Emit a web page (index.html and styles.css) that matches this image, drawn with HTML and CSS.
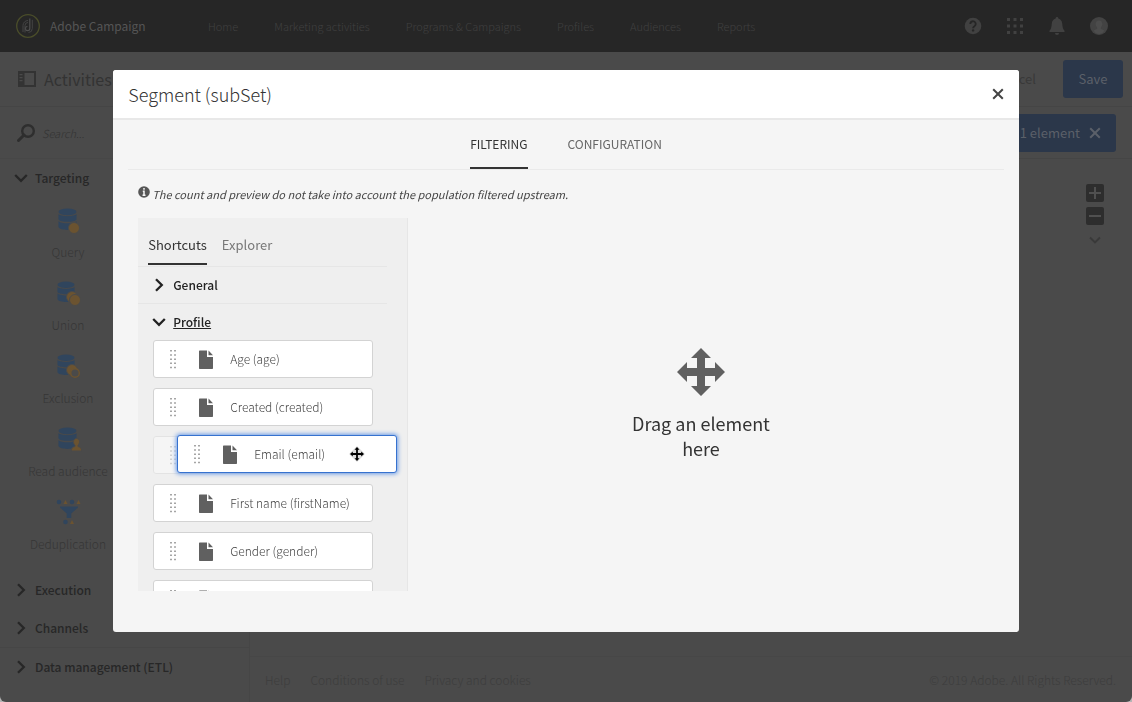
FILE: index.html
```html
<!DOCTYPE html>
<html lang="en">
<head>
<meta charset="UTF-8">
<meta name="viewport" content="width=device-width, initial-scale=1">
<title>Adobe Campaign - Segment</title>
<link rel="stylesheet" href="styles.css">
</head>
<body>

<!-- shared icons -->
<svg class="sprite" aria-hidden="true">
  <symbol id="i-right" viewBox="0 0 14 14"><path d="M4 1.200 9.800 7 4 12.800" fill="none" stroke="currentColor" stroke-width="2.300"/></symbol>
  <symbol id="i-down" viewBox="0 0 14 14"><path d="M1.200 4 7 9.800 12.800 4" fill="none" stroke="currentColor" stroke-width="2.300"/></symbol>
  <symbol id="i-close" viewBox="0 0 12 12"><path d="M1.200 1.200l9.600 9.600M10.800 1.200l-9.600 9.600" fill="none" stroke="currentColor" stroke-width="2"/></symbol>
  <symbol id="i-grip" viewBox="0 0 8 20">
    <path d="M2 1v18.500M6 1v18.500" fill="none" stroke="currentColor" stroke-width="1.500" stroke-dasharray="1.500 2.700"/>
  </symbol>
  <symbol id="i-file" viewBox="0 0 14 19"><path d="M0 1.200Q0 .5.700.5H8v6.500h6v11.300q0 .7-.7.700H.7q-.7 0-.7-.7z"/><path d="M9.500.5 14 5.300H9.500z"/></symbol>
  <symbol id="i-move" viewBox="0 0 48 48"><path d="M24 0l10 10h-6v10h10v-6l10 10-10 10v-6H28v10h6L24 48 14 38h6V28H10v6L0 24l10-10v6h10V10h-6z"/></symbol>
  <symbol id="i-data" viewBox="0 0 20 24">
    <ellipse cx="10" cy="4" rx="9.500" ry="3.600"/>
    <path d="M.5 6.300c2 3 17 3 19 0v5.700c-2 3.300-17 3.300-19 0z"/>
    <path d="M.5 13.500c2 3.200 17 3.200 19 0V20c-2 4-17 4-19 0z"/>
  </symbol>
</svg>

<div class="app">
  <header class="topbar">
    <a class="brand" href="#">
      <svg width="24" height="24" viewBox="0 0 24 24" fill="none">
        <circle cx="12" cy="12" r="11.300" stroke="#4a4d2a" stroke-width="1.300"/>
        <path d="M13.800 4.500v10a2.200 2.200 0 0 1-4.400 0 2 2 0 0 1 2-2" stroke="#505050" stroke-width="1.200"/>
        <path d="M12 6.500a5 5 0 0 0-5 5v6.500M12 8.500a3 3 0 0 0-3 3v7M12.500 18.500a4 4 0 0 0 3.800-4V5.800" stroke="#444" stroke-width="1"/>
      </svg>
      Adobe Campaign
    </a>
    <nav class="menu">
      <a href="#">Home</a>
      <a href="#">Marketing activities</a>
      <a href="#">Programs &amp; Campaigns</a>
      <a href="#">Profiles</a>
      <a href="#">Audiences</a>
      <a href="#">Reports</a>
    </nav>
    <div class="tools">
      <button aria-label="Help">
        <svg width="18" height="18" viewBox="0 0 18 18"><circle cx="9" cy="9" r="8.300" fill="currentColor"/><path d="M6.300 7a2.700 2.700 0 1 1 4.300 2.100C9.500 9.800 9.100 10 9.100 11.300" fill="none" stroke="#262626" stroke-width="1.900"/><circle cx="9.100" cy="13.400" r="1.200" fill="#262626"/></svg>
      </button>
      <button aria-label="Applications">
        <svg width="18" height="18" viewBox="0 0 18 18" fill="currentColor"><path d="M1 1h3v3H1zM7.500 1h3v3h-3zM14 1h3v3h-3zM1 7.500h3v3H1zM7.500 7.500h3v3h-3zM14 7.500h3v3h-3zM1 14h3v3H1zM7.500 14h3v3h-3zM14 14h3v3h-3z"/></svg>
      </button>
      <button aria-label="Notifications">
        <svg width="18" height="18" viewBox="0 0 18 18" fill="currentColor"><path d="M9 0c.8 0 1.300.6 1.300 1.400 2.600.7 3.700 2.600 3.900 5.100.3 4 .8 5.500 2.300 7.200V15h-15v-1.300c1.500-1.700 2-3.200 2.300-7.200.2-2.500 1.300-4.400 3.900-5.100C7.700.6 8.200 0 9 0z"/><path d="M7 16h4a2 2 0 0 1-4 0z"/></svg>
      </button>
      <button class="avatar" aria-label="User profile">
        <svg width="18" height="18" viewBox="0 0 18 18"><circle cx="9" cy="9" r="9" fill="#434343"/><path d="M9 3.500c2.200 0 3.300 1.600 3.300 3.500 0 1.500-.7 2.800-1.500 3.500v1.200l3.500 1.800C13 16.300 11 17 9 17s-4-.7-5.300-3.500l3.500-1.800v-1.200C6.400 9.800 5.700 8.500 5.700 7c0-1.900 1.100-3.500 3.300-3.500z" fill="#4c4c4c"/></svg>
      </button>
    </div>
  </header>

  <div class="titlebar">
    <h1>
      <svg width="18" height="16" viewBox="0 0 18 16"><path d="M0 0h18v16H0zM6.500 2v12H16V2zM1.500 3v1.300h3V3zM1.500 6v1.300h3V6zM1.500 9v1.300h3V9z" fill="currentColor" fill-rule="evenodd"/></svg>
      Activities
    </h1>
    <button class="cancel">Cancel</button>
    <button class="save">Save</button>
  </div>

  <div class="main">
    <aside class="sidebar">
      <div class="search">
        <svg width="18" height="18" viewBox="0 0 18 18" fill="none" stroke="currentColor"><circle cx="11" cy="7" r="5.800" stroke-width="2.400"/><path d="M7 11l-5.500 5.500" stroke-width="3" stroke-linecap="round"/></svg>
        <input type="text" placeholder="Search..." aria-label="Search activities">
      </div>
      <button class="group"><svg width="14" height="14"><use href="#i-down"/></svg>Targeting</button>
      <ul class="activities">
        <li>
          <svg width="28" height="28" viewBox="0 0 28 28"><use href="#i-data" x="4" y="1" width="19" height="23"/><circle class="dot" cx="20" cy="21" r="5.500"/></svg>
          Query
        </li>
        <li>
          <svg width="28" height="28" viewBox="0 0 28 28"><use href="#i-data" x="3" y="1" width="18" height="22"/><circle class="dot" cx="18" cy="17" r="5.500"/><circle class="dot" cx="21" cy="20" r="5.500"/></svg>
          Union
        </li>
        <li>
          <svg width="28" height="28" viewBox="0 0 28 28"><use href="#i-data" x="3" y="1" width="18" height="22"/><circle class="dot" cx="18" cy="17" r="5.500"/><circle class="ring" cx="21" cy="20" r="4.300"/></svg>
          Exclusion
        </li>
        <li>
          <svg width="28" height="28" viewBox="0 0 28 28"><use href="#i-data" x="4" y="1" width="19" height="23"/><path class="dot" d="M22.500 12.500c2 0 3 1.400 3 3.300 0 1.600-.8 2.700-1.500 3.600v1.100c2 .5 3.700 1.200 3.700 4.500H17.300c0-3.300 1.700-4 3.700-4.500v-1.100c-.7-.9-1.500-2-1.500-3.600 0-1.900 1-3.300 3-3.300z"/></svg>
          Read audience
        </li>
        <li>
          <svg width="28" height="28" viewBox="0 0 28 28"><circle cx="5" cy="3" r="2.300"/><circle cx="18" cy="3" r="2.300"/><path d="M6 7.500h18v1l-6.700 6v4.500h-4.600v-4.500L6 8.500z"/><circle cx="11.500" cy="23" r="2.300"/><path class="tri" d="M9.500 5l2-4 2 4zM22.500 5l2-4 2 4zM16 25l2-4 2 4z"/></svg>
          Deduplication
        </li>
      </ul>
      <button class="group"><svg width="14" height="14"><use href="#i-right"/></svg>Execution</button>
      <button class="group"><svg width="14" height="14"><use href="#i-right"/></svg>Channels</button>
      <button class="group line"><svg width="14" height="14"><use href="#i-right"/></svg>Data management (ETL)</button>
    </aside>

    <div class="workspace">
      <div class="selection">
        <div class="selected">
          1 element
          <button aria-label="Clear selection"><svg width="12" height="12"><use href="#i-close"/></svg></button>
        </div>
      </div>
      <div class="canvas">
        <div class="zoom">
          <button aria-label="Zoom in"><svg width="18" height="18" viewBox="0 0 18 18"><rect width="18" height="18" rx="2" fill="#2d2d2d"/><path d="M9 3v12M3 9h12" stroke="#505050" stroke-width="2"/></svg></button>
          <button aria-label="Zoom out"><svg width="18" height="18" viewBox="0 0 18 18"><rect width="18" height="18" rx="2" fill="#2d2d2d"/><path d="M3 9h12" stroke="#505050" stroke-width="2"/></svg></button>
          <button aria-label="More"><svg width="12" height="12"><use href="#i-down"/></svg></button>
        </div>
      </div>
      <footer class="footer">
        <a href="#">Help</a>
        <a href="#">Conditions of use</a>
        <a href="#">Privacy and cookies</a>
        <span>© 2019 Adobe. All Rights Reserved.</span>
      </footer>
    </div>
  </div>
</div>

<div class="overlay">
  <section class="modal" role="dialog" aria-labelledby="modal-title">
    <header class="modal-head">
      <h2 id="modal-title">Segment (subSet)</h2>
      <button aria-label="Close"><svg width="12" height="12"><use href="#i-close"/></svg></button>
    </header>
    <div class="modal-tabs" role="tablist">
      <button class="active" role="tab" aria-selected="true">FILTERING</button>
      <button role="tab" aria-selected="false">CONFIGURATION</button>
    </div>
    <p class="note">
      <svg width="12" height="12" viewBox="0 0 12 12"><circle cx="6" cy="6" r="5.800" fill="#555"/><path d="M6 2v1.700M4.800 5.200H6v4M4.500 9.200h3" stroke="#f5f5f5" stroke-width="1.500" fill="none"/></svg>
      <em>The count and preview do not take into account the population filtered upstream.</em>
    </p>
    <div class="editor">
      <div class="palette">
        <div class="palette-tabs" role="tablist">
          <button class="active" role="tab" aria-selected="true">Shortcuts</button>
          <button role="tab" aria-selected="false">Explorer</button>
        </div>
        <button class="section"><svg width="14" height="14"><use href="#i-right"/></svg>General</button>
        <button class="section open"><svg width="14" height="14"><use href="#i-down"/></svg><span>Profile</span></button>
        <ul class="fields">
          <li><div class="field"><svg class="grip" width="8" height="20"><use href="#i-grip"/></svg><svg class="file" width="14" height="19"><use href="#i-file"/></svg>Age (age)</div></li>
          <li><div class="field"><svg class="grip" width="8" height="20"><use href="#i-grip"/></svg><svg class="file" width="14" height="19"><use href="#i-file"/></svg>Created (created)</div></li>
          <li>
            <div class="field ghost"><svg class="grip" width="8" height="20"><use href="#i-grip"/></svg></div>
            <div class="field dragged">
              <svg class="grip" width="8" height="20"><use href="#i-grip"/></svg><svg class="file" width="14" height="19"><use href="#i-file"/></svg>Email (email)
              <svg class="cursor" width="16" height="16" viewBox="0 0 16 16"><path d="M8 0l8 8-8 8-8-8z" fill="#ddd"/><path d="M8 1l2.500 2.800H8.900v3.300h3.300V5.500L15 8l-2.800 2.500V8.900H8.900v3.300h1.600L8 15l-2.500-2.800h1.600V8.900H3.800v1.600L1 8l2.800-2.500v1.600h3.300V3.800H5.500z" fill="#000"/></svg>
            </div>
          </li>
          <li><div class="field"><svg class="grip" width="8" height="20"><use href="#i-grip"/></svg><svg class="file" width="14" height="19"><use href="#i-file"/></svg>First name (firstName)</div></li>
          <li><div class="field"><svg class="grip" width="8" height="20"><use href="#i-grip"/></svg><svg class="file" width="14" height="19"><use href="#i-file"/></svg>Gender (gender)</div></li>
          <li><div class="field"><svg class="grip" width="8" height="20"><use href="#i-grip"/></svg><svg class="file" width="14" height="19"><use href="#i-file"/></svg></div></li>
        </ul>
      </div>
      <div class="dropzone">
        <svg width="48" height="48"><use href="#i-move"/></svg>
        <p>Drag an element here</p>
      </div>
    </div>
  </section>
</div>

</body>
</html>
```
FILE: styles.css
```css
* {
  box-sizing: border-box;
}
html {
  background: #b5b5b5;
}
body {
  margin: 0;
  font-family: "Noto Sans CJK SC", "Open Sans", sans-serif;
  font-size: 12px;
  line-height: 20px;
  color: #333;
}
h1, h2, p, ul {
  margin: 0;
  padding: 0;
  font-weight: 300;
}
ul {
  list-style: none;
}
a {
  color: inherit;
  text-decoration: none;
}
button {
  padding: 0;
  border: none;
  background: none;
  font: inherit;
  color: inherit;
  cursor: pointer;
}
svg {
  display: block;
  flex: none;
}
.sprite {
  position: absolute;
  width: 0;
  height: 0;
}

/* page behind the dialog */
.app {
  display: flex;
  flex-direction: column;
  height: 100vh;
  background: #4a4a4a;
  color: #393939;
  border-radius: 0 0 6px 6px;
  overflow: hidden;
}
.topbar {
  display: flex;
  align-items: center;
  height: 52px;
  padding: 0 24px 0 16px;
  background: #262626;
}
.brand {
  display: flex;
  align-items: center;
  gap: 10px;
  width: 192px;
  color: #555;
}
.menu {
  display: flex;
  gap: 36px;
  font-size: 11px;
  font-weight: 300;
  color: #404040;
}
.tools {
  display: flex;
  align-items: center;
  gap: 24px;
  margin-left: auto;
  color: #414141;
}
.titlebar {
  display: flex;
  align-items: center;
  height: 55px;
  padding: 0 9px 0 18px;
  border-bottom: 1px solid #454545;
}
.titlebar h1 {
  display: flex;
  align-items: center;
  gap: 8px;
  margin-right: auto;
  font-size: 16px;
  font-weight: 400;
  color: #333;
}
.cancel {
  margin-right: 27px;
  font-size: 13px;
}
.save {
  width: 60px;
  height: 38px;
  border-radius: 3px;
  background: #2b374a;
  color: #5b6069;
  font-size: 13px;
}
.main {
  display: flex;
  flex: 1;
  min-height: 0;
}
.sidebar {
  width: 250px;
  border-right: 1px solid #464646;
}
.search {
  display: flex;
  align-items: center;
  gap: 7px;
  height: 52px;
  padding-left: 17px;
  border-bottom: 1px solid #474747;
  color: #2e2e2e;
}
.search input {
  width: 180px;
  padding: 0;
  border: none;
  outline: none;
  background: none;
  font: italic 300 11px/20px "Noto Sans CJK SC", sans-serif;
}
.search input::placeholder {
  color: #333;
}
.group {
  display: flex;
  align-items: center;
  gap: 7px;
  width: 100%;
  height: 38px;
  padding-left: 14px;
  font-weight: 500;
  color: #272727;
}
.group.line {
  border-top: 1px solid #464646;
}
.activities {
  width: 136px;
  padding: 5px 0 4px;
}
.activities li {
  display: flex;
  flex-direction: column;
  align-items: center;
  gap: 7px;
  height: 73px;
  padding-top: 5px;
  color: #363636;
  fill: #30455d;
}
.activities .dot {
  fill: #6b5330;
  stroke: #4a4a4a;
}
.activities .ring {
  fill: #4a4a4a;
  stroke: #6b5330;
  stroke-width: 1.5px;
}
.activities .tri {
  fill: #6b5330;
}
.workspace {
  display: flex;
  flex: 1;
  flex-direction: column;
}
.selection {
  height: 52px;
  padding: 7px 16px 7px 15px;
  border-bottom: 1px solid #454545;
}
.selected {
  display: flex;
  align-items: center;
  justify-content: flex-end;
  gap: 9px;
  height: 38px;
  padding-right: 15px;
  border-radius: 3px;
  background: #2b374a;
  color: #5b6069;
  font-size: 13px;
}
.canvas {
  display: flex;
  flex: 1;
  justify-content: flex-end;
  padding: 25px 28px;
}
.zoom {
  display: flex;
  flex-direction: column;
  align-items: center;
  gap: 5px;
}
.zoom button:last-child {
  margin-top: 4px;
}
.footer {
  display: flex;
  align-items: center;
  gap: 20px;
  height: 46px;
  padding: 0 16px 0 15px;
  border-top: 1px solid #474747;
  font-weight: 300;
  color: #3d3d3d;
}
.footer span {
  margin-left: auto;
}

/* dialog */
.overlay {
  position: fixed;
  inset: 0;
  display: flex;
  align-items: center;
  justify-content: center;
}
.modal {
  display: flex;
  flex-direction: column;
  width: 80%;
  height: 80%;
  border-radius: 3px;
  background: #f5f5f5;
  overflow: hidden;
}
.modal-head {
  display: flex;
  align-items: center;
  justify-content: space-between;
  height: 50px;
  padding: 0 15px;
  border-bottom: 2px solid #e8e8e8;
  background: #fff;
}
.modal-head h2 {
  font-size: 18px;
  line-height: 28px;
}
.modal-head button {
  color: #444;
}
.modal-tabs {
  display: flex;
  justify-content: center;
  gap: 40px;
  height: 50px;
  margin: 0 15px;
  border-bottom: 1px solid #eaeaea;
  color: #666;
}
.modal-tabs button {
  border-bottom: 2px solid transparent;
}
.modal-tabs .active {
  border-color: #333;
  color: #333;
}
.note {
  display: flex;
  gap: 2px;
  padding: 14px 25px;
  font-size: 11px;
  font-weight: 400;
  color: #444;
}
.note svg {
  margin-top: 2px;
}
.editor {
  display: flex;
  flex: 1;
  min-height: 0;
  padding: 0 25px 41px;
}
.palette {
  width: 270px;
  padding: 0 20px 0 0;
  border-right: 1px solid #e6e6e6;
  background: #efefef;
  overflow: hidden;
}
.palette-tabs {
  display: flex;
  gap: 15px;
  height: 47px;
  margin-bottom: 1px;
  padding: 8px 10px 0;
  font-size: 13px;
  color: #777;
}
.palette-tabs button {
  border-bottom: 2px solid transparent;
}
.palette-tabs .active {
  border-color: #333;
  color: #333;
}
.section {
  display: flex;
  align-items: center;
  gap: 7px;
  width: 100%;
  height: 37px;
  padding-left: 14px;
  border-top: 1px solid #e6e6e6;
  font-weight: 500;
  color: #222;
}
.open span {
  text-decoration: underline;
}
.fields {
  display: flex;
  flex-direction: column;
  gap: 10px;
  padding-left: 15px;
}
.fields li {
  position: relative;
  width: 220px;
}
.field {
  display: flex;
  align-items: center;
  height: 38px;
  padding-left: 15px;
  border: 1px solid #d3d3d3;
  border-radius: 3px;
  background: #fff;
  font-weight: 300;
  color: #444;
}
.grip {
  color: #888;
}
.file {
  margin: 0 17px 0 22px;
  fill: #606060;
}
.ghost {
  opacity: 0.4;
}
.dragged {
  position: absolute;
  top: -1px;
  left: 24px;
  width: 220px;
  border-color: #3672cf;
  box-shadow: 0 0 4px 1px #6b9be6;
}
.cursor {
  margin: 0 31px 0 auto;
}
.dropzone {
  display: flex;
  flex: 1;
  flex-direction: column;
  align-items: center;
  justify-content: center;
  gap: 15px;
  fill: #606060;
}
.dropzone p {
  max-width: 150px;
  font-size: 18px;
  line-height: 25px;
  font-weight: 400;
  text-align: center;
}
```
